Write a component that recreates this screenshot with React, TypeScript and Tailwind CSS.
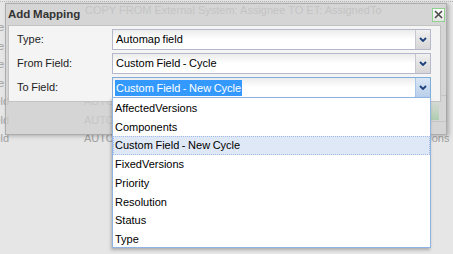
import React from "react";

const font = { fontFamily: '"Liberation Sans", Arial, sans-serif' };

const options = [
  "AffectedVersions",
  "Components",
  "Custom Field - New Cycle",
  "FixedVersions",
  "Priority",
  "Resolution",
  "Status",
  "Type",
];

function Chevron() {
  return (
    <svg width="8" height="5" viewBox="0 0 8 5">
      <path d="M1 1 L4 4 L7 1" fill="none" stroke="#1c3f7c" strokeWidth="1.8" />
    </svg>
  );
}

function Combo({ value, focused }: { value: string; focused?: boolean }) {
  return (
    <div
      className={`flex h-[21px] w-[319px] border ${
        focused ? "border-[#7eadd9]" : "border-[#b5b8c8]"
      }`}
    >
      <div className="flex flex-1 items-center bg-gradient-to-b from-[#ececec] via-white to-white pl-[2px] text-[11px] text-black">
        {focused ? (
          <span className="bg-[#3399ff] px-px leading-[16px] text-white">{value}</span>
        ) : (
          <span className="pl-px">{value}</span>
        )}
      </div>
      <div
        className={`flex w-[15px] items-center justify-center border-l ${
          focused
            ? "border-[#a9c5e6] bg-gradient-to-b from-[#d9e6f5] to-[#b9cfea]"
            : "border-[#c5c7d0] bg-gradient-to-b from-[#f0f0f0] to-[#d6d6d6]"
        }`}
      >
        <Chevron />
      </div>
    </div>
  );
}

function BgRow({ first, second, third }: { first: string; second: string; third: string }) {
  return (
    <div className="flex h-[18.5px] items-center text-[11px] text-[#a0a0a0]">
      <div className="w-[84px] shrink-0 overflow-hidden">
        <span className="ml-[-8px] block whitespace-nowrap">{first}</span>
      </div>
      <div className="w-[330px] shrink-0">{second}</div>
      <div className="w-[40px] shrink-0 whitespace-nowrap">{third}</div>
    </div>
  );
}

export default function App() {
  return (
    <div
      className="relative h-[254px] w-[453px] overflow-hidden bg-[#e6e6e6] [word-spacing:-0.5px]"
      style={font}
    >
      {/* page behind the window */}
      <div className="flex flex-col">
        <div className="mt-px border-t border-dotted border-[#b8b8b8]" />
        <div className="flex h-[16px] items-center pl-[85px] text-[11px] text-[#979797] whitespace-nowrap [word-spacing:0px]">
          COPY FROM External System: Assignee TO ET: AssignedTo
        </div>
        <BgRow first="ne" second="" third="" />
        <BgRow first="ne" second="" third="" />
        <BgRow first="ne" second="" third="" />
        <BgRow first="ne" second="" third="" />
        <BgRow first="ield" second="AUTOMAP" third="" />
        <div className="relative">
          <BgRow first="ield" second="AUTOMAP" third="" />
          <div className="absolute left-[428px] top-[-16px] flex h-[27px] w-[19px] items-end border border-[#9a9a9a] bg-[#ececec] p-px">
            <div className="h-[18px] w-[9px] bg-gradient-to-b from-[#e8f8e8] to-[#2fc33a]" />
          </div>
        </div>
        <BgRow first="ield" second="AUTOMAP" third="ersions" />
      </div>

      {/* window */}
      <div className="absolute left-[5px] top-[3px] flex h-[132px] w-[442px] flex-col border border-[rgba(140,140,140,0.55)] bg-[rgba(208,208,208,0.78)] shadow-[2px_1px_4px_rgba(0,0,0,0.25)]">
        <div className="flex h-[21px] items-center justify-between pl-[2px] pr-px">
          <span className="text-[11.5px] font-bold text-[#333]">Add Mapping</span>
          <div className="flex h-[14px] w-[13px] items-center justify-center border border-[#8fd28f] bg-gradient-to-b from-white to-[#e4e4e4]">
            <svg width="9" height="9" viewBox="0 0 9 9">
              <path d="M1 1 L8 8 M8 1 L1 8" stroke="#4a4a4a" strokeWidth="1.6" />
            </svg>
          </div>
        </div>
        <div className="ml-[2px] mr-[5px] flex h-[77px] flex-col gap-[3px] border border-[#c2c2c2] bg-[#f4f4f4] pl-[8px] pt-[3px]">
          {[
            ["Type:", "Automap field", false],
            ["From Field:", "Custom Field - Cycle", false],
            ["To Field:", "Custom Field - New Cycle", true],
          ].map(([label, value, focused]) => (
            <div key={label as string} className="flex items-center">
              <div className="w-[95px] text-[11px] text-[#222]">{label as string}</div>
              <Combo value={value as string} focused={focused as boolean} />
            </div>
          ))}
        </div>
      </div>

      {/* open list of the To Field combo */}
      <div className="absolute left-[112px] top-[97px] flex h-[151px] w-[319px] flex-col border border-[#8fb3e3] bg-white py-px shadow-[-1px_2px_3px_rgba(0,0,0,0.25)]">
        {options.map((o) => (
          <div
            key={o}
            className={`flex h-[18.7px] shrink-0 items-center pl-[2px] text-[11px] text-black ${
              o === "Custom Field - New Cycle"
                ? "border border-dotted border-[#a3bae9] bg-[#dfe8f6] pl-px"
                : ""
            }`}
          >
            {o}
          </div>
        ))}
      </div>
    </div>
  );
}
